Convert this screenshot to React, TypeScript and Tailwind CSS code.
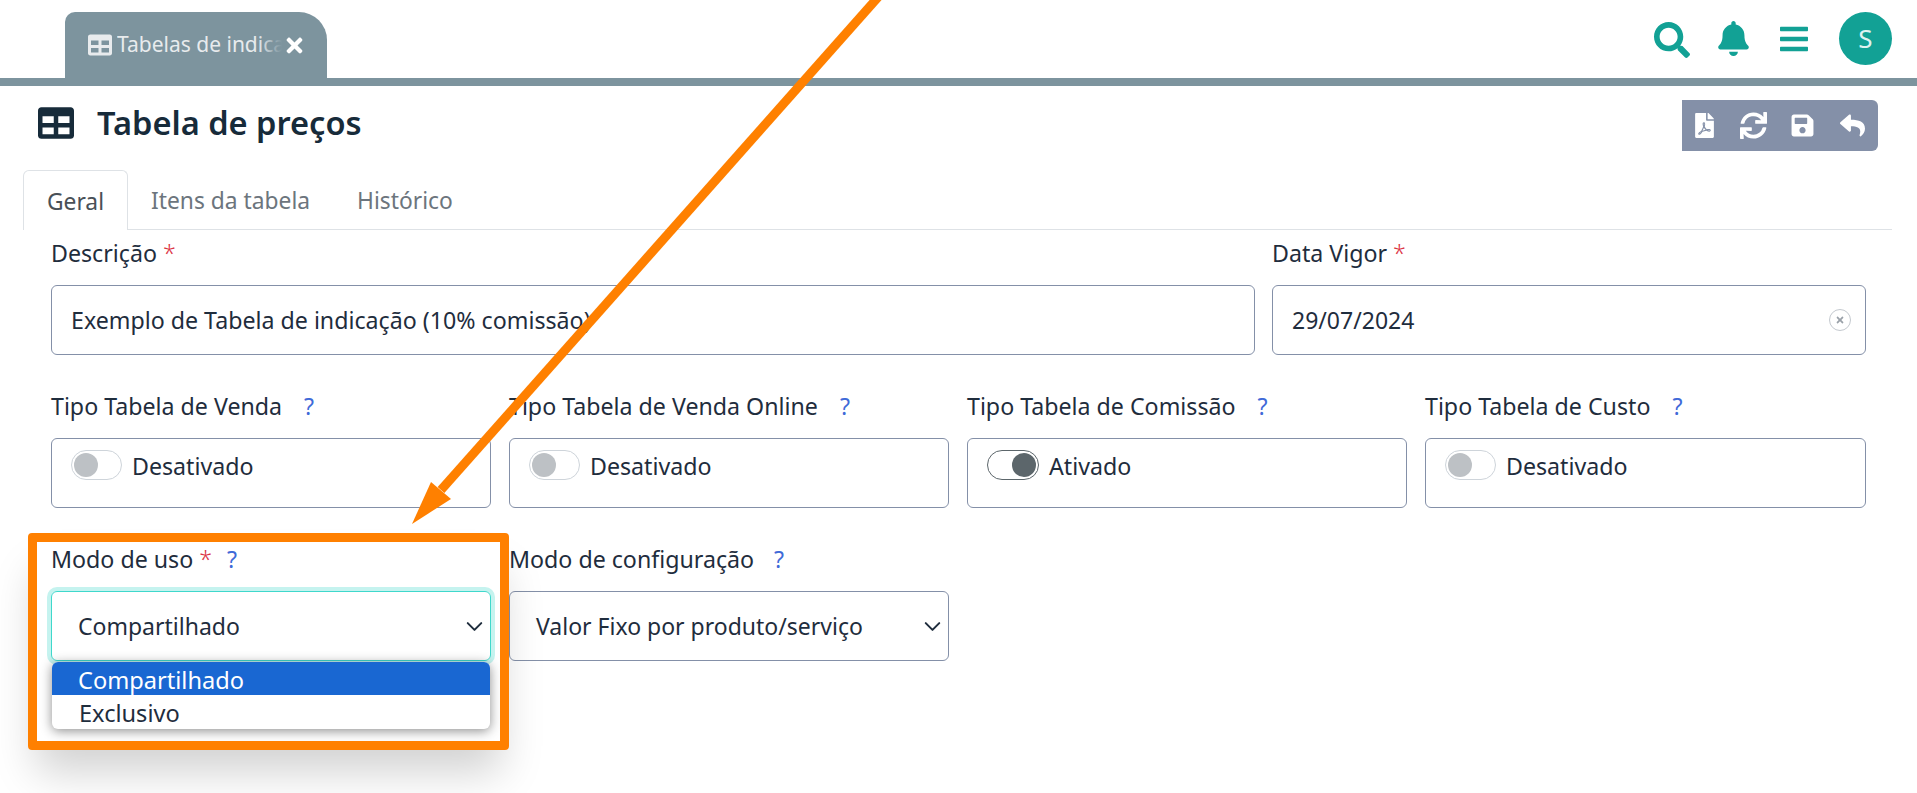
import { FaBars, FaBell, FaFilePdf, FaReply, FaSave, FaSearch, FaSync, FaTable, FaTimes } from "react-icons/fa";
import { ChevronDown } from "lucide-react";

const Label = ({ text, required, help, gap = "ml-[22px]" }: { text: string; required?: boolean; help?: boolean; gap?: string }) => (
  <div className="flex h-[30px] items-center text-[23.2px] whitespace-nowrap text-[#1f2d3d]">
    <span>{text}</span>
    {required && <span className="ml-[6px] font-light text-[#dc3545]">*</span>}
    {help && <span className={`${gap} text-[#3f6ad8]`}>?</span>}
  </div>
);

const Toggle = ({ on }: { on?: boolean }) => (
  <div className="flex h-[70px] items-start rounded-md border border-[#8490a8] pt-[11px] pl-[19px]">
    <div className="flex h-[30px] items-center gap-[10px]">
      <div
        className={
          on
            ? "flex h-[30px] w-[52px] items-center justify-end rounded-full border border-[#5c666b] px-[2px]"
            : "flex h-[30px] w-[51px] items-center justify-start rounded-full border border-[#ced4da] px-[2px]"
        }
      >
        <div className={on ? "h-[24px] w-[24px] rounded-full bg-[#5c666b]" : "h-[24px] w-[24px] rounded-full bg-[#bdc1c5]"} />
      </div>
      <span className="mt-[3px] text-[23.2px] text-[#1f2d3d]">{on ? "Ativado" : "Desativado"}</span>
    </div>
  </div>
);

const Select = ({ value, focused }: { value: string; focused?: boolean }) => (
  <div
    className={
      focused
        ? "flex h-[70px] items-center justify-between rounded-md border border-[#3fd8cc] pr-[2px] pl-[26px] shadow-[0_0_0_4px_#c5f3ef]"
        : "flex h-[70px] items-center justify-between rounded-md border border-[#8490a8] pr-[2px] pl-[26px]"
    }
  >
    <span className="text-[23px] text-[#1f2d3d]">{value}</span>
    <ChevronDown size={27} strokeWidth={1.8} className="text-[#1f2d3d]" />
  </div>
);

export default function App() {
  return (
    <div className="relative h-[793px] w-[1917px] overflow-hidden bg-white font-['Noto_Sans',sans-serif]">
      {/* TOP BAR */}
      <header className="flex h-[86px] items-start justify-between border-b-8 border-[#7d949e] pr-[25px] pl-[65px]">
        <div className="mt-[12px] flex h-[66px] w-[262px] items-center rounded-tl-[10px] rounded-tr-[28px] bg-[#7d949e] pl-[23px] text-white">
          <FaTable size={24} className="shrink-0 text-[#e8ebed]" />
          <div className="relative ml-[5px] w-[165px] overflow-hidden text-[21px] whitespace-nowrap text-[#e8ebed]">
            Tabelas de indicação
            <div className="absolute inset-y-0 right-0 w-[24px] bg-gradient-to-r from-transparent to-[#7d949e]" />
          </div>
          <FaTimes size={23} className="ml-[1px] shrink-0" />
        </div>
        <div className="flex items-start text-[#12a195]">
          <FaSearch size={36} className="mt-[22px]" />
          <FaBell size={35} className="mt-[21px] ml-[26px]" />
          <FaBars size={32} className="mt-[23px] ml-[27px]" />
          <div className="mt-[12px] ml-[29px] flex h-[53px] w-[53px] items-center justify-center rounded-full bg-[#12a195] text-[26px] text-[#dff3f1]">
            S
          </div>
        </div>
      </header>

      {/* PAGE TITLE */}
      <div className="flex h-[84px] items-start justify-between pt-[14px] pr-[39px] pl-[38px]">
        <div className="flex items-center">
          <FaTable size={36} className="text-[#172b3a]" />
          <h1 className="ml-[23px] text-[32.6px] leading-[46px] font-semibold text-[#172b3a]">Tabela de preços</h1>
        </div>
        <div className="flex h-[51px] w-[196px] items-center rounded-r-md bg-[#8490a8] pl-[10px] text-white">
          <FaFilePdf size={25} />
          <FaSync size={27} className="ml-[23px]" />
          <FaSave size={25} className="ml-[23px]" />
          <FaReply size={25} className="ml-[25px]" />
        </div>
      </div>

      {/* TABS */}
      <div className="mr-[25px] ml-[23px] flex h-[60px] items-stretch border-b border-[#dee2e6] text-[22.8px]">
        <div className="-mb-px flex w-[105px] items-center justify-center rounded-t-md border border-b-0 border-[#dee2e6] bg-white pt-[3px] text-[#495057]">
          Geral
        </div>
        <div className="ml-[23px] flex items-center pt-[3px] text-[#6c757d]">Itens da tabela</div>
        <div className="ml-[47px] flex items-center pt-[3px] text-[#6c757d]">Histórico</div>
      </div>

      {/* FORM */}
      <div className="flex flex-col gap-[36px] pt-[8px] pr-[51px] pl-[51px]">
        <div className="flex gap-[17px]">
          <div className="flex w-[1204px] flex-col gap-[17px]">
            <Label text="Descrição" required />
            <input
              readOnly
              value="Exemplo de Tabela de indicação (10% comissão)"
              className="h-[70px] rounded-md border border-[#8490a8] pl-[19px] text-[23.2px] text-[#1f2d3d] outline-none"
            />
          </div>
          <div className="flex flex-1 flex-col gap-[17px]">
            <Label text="Data Vigor" required />
            <div className="flex h-[70px] items-center justify-between rounded-md border border-[#8490a8] pr-[14px] pl-[19px] text-[23px] text-[#1f2d3d]">
              <span>29/07/2024</span>
              <div className="flex h-[22px] w-[22px] items-center justify-center rounded-full border border-[#c4c9cf] text-[#9aa1a9]">
                <FaTimes size={10} />
              </div>
            </div>
          </div>
        </div>

        <div className="grid grid-cols-[440px_440px_440px_441px] gap-x-[18px]">
          <div className="flex flex-col gap-[17px]">
            <Label text="Tipo Tabela de Venda" help />
            <Toggle />
          </div>
          <div className="flex flex-col gap-[17px]">
            <Label text="Tipo Tabela de Venda Online" help />
            <Toggle />
          </div>
          <div className="flex flex-col gap-[17px]">
            <Label text="Tipo Tabela de Comissão" help />
            <Toggle on />
          </div>
          <div className="flex flex-col gap-[17px]">
            <Label text="Tipo Tabela de Custo" help />
            <Toggle />
          </div>
        </div>

        <div className="grid grid-cols-[440px_440px_440px_441px] gap-x-[18px]">
          <div className="relative flex flex-col gap-[17px]">
            <Label text="Modo de uso" required help gap="ml-[15px]" />
            <Select value="Compartilhado" focused />
            {/* dropdown list */}
            <div className="absolute top-[118px] left-[1px] w-[438px] overflow-hidden rounded-md bg-white text-[23.6px] leading-[36px] text-[#1f2d3d] shadow-[0_2px_12px_rgba(0,0,0,0.45)]">
              <div className="h-[33px] bg-[#1967d2] pl-[26px] text-white">Compartilhado</div>
              <div className="h-[34px] pl-[27px]">Exclusivo</div>
            </div>
          </div>
          <div className="flex flex-col gap-[17px]">
            <Label text="Modo de configuração" help gap="ml-[20px]" />
            <Select value="Valor Fixo por produto/serviço" />
          </div>
        </div>
      </div>

      {/* ANNOTATIONS */}
      <div className="absolute top-[533px] left-[28px] h-[217px] w-[481px] rounded-[4px] border-[9px] border-[#ff8000] shadow-[0_30px_40px_-8px_rgba(0,0,0,0.18)]" />
      <svg className="absolute inset-0" width="1917" height="793" viewBox="0 0 1917 793">
        <line x1="880" y1="-5" x2="441" y2="490" stroke="#ff8000" strokeWidth="9" />
        <polygon points="412,524 431,482 451,499" fill="#ff8000" />
      </svg>
    </div>
  );
}
